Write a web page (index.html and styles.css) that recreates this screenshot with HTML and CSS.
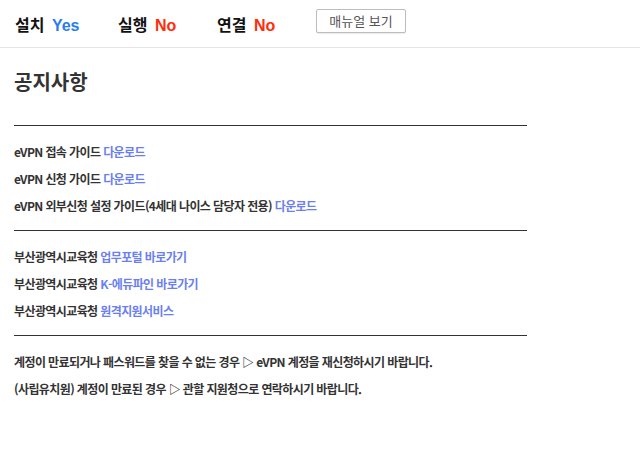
FILE: index.html
```html
<!DOCTYPE html>
<html lang="ko">
<head>
  <meta charset="UTF-8">
  <meta name="viewport" content="width=device-width, initial-scale=1.0">
  <title>eVPN 상태</title>
  <link rel="stylesheet" href="styles.css">
</head>
<body>
  <!-- 상태 표시줄 -->
  <div class="status-bar">
    <div class="stat">설치 <span class="yes">Yes</span></div>
    <div class="stat">실행 <span class="no">No</span></div>
    <div class="stat">연결 <span class="no">No</span></div>
    <button class="manual-btn">매뉴얼 보기</button>
  </div>

  <div class="notice">
    <h1>공지사항</h1>

    <div class="group">
      <p>eVPN 접속 가이드 <a href="#">다운로드</a></p>
      <p>eVPN 신청 가이드 <a href="#">다운로드</a></p>
      <p>eVPN 외부신청 설정 가이드(4세대 나이스 담당자 전용) <a href="#">다운로드</a></p>
    </div>

    <div class="group">
      <p>부산광역시교육청 <a href="#">업무포털 바로가기</a></p>
      <p>부산광역시교육청 <a href="#">K-에듀파인 바로가기</a></p>
      <p>부산광역시교육청 <a href="#">원격지원서비스</a></p>
    </div>

    <div class="group">
      <p>계정이 만료되거나 패스워드를 찾을 수 없는 경우 ▷ eVPN 계정을 재신청하시기 바랍니다.</p>
      <p>(사립유치원) 계정이 만료된 경우 ▷ 관할 지원청으로 연락하시기 바랍니다.</p>
    </div>
  </div>
</body>
</html>
```

FILE: styles.css
```css
body {
  margin: 0;
  font-family: "Noto Sans CJK KR", "Noto Sans", sans-serif;
  color: #333;
  background: #fff;
}
.status-bar {
  display: grid;
  grid-template-columns: 103px 99px 99px auto;
  align-items: center;
  height: 47px;
  padding-left: 15px;
  border-bottom: 1px solid #e4e4e4;
}
.stat {
  font-size: 16px;
  font-weight: bold;
  color: #111;
  padding-top: 1px;
}
.stat span {
  margin-left: 3px;
  font-family: "Liberation Sans", Arial, sans-serif;
}
.yes {
  color: #2a7cf0;
}
.no {
  color: #ff2d0a;
}
.manual-btn {
  justify-self: start;
  width: 90px;
  height: 24px;
  padding: 0;
  margin-top: -6px;
  font-family: inherit;
  font-size: 13px;
  color: #555;
  background: #fff;
  border: 1px solid #bdbdbd;
  border-radius: 2px;
  box-shadow: 0 1px 1px rgba(0, 0, 0, 0.08);
  cursor: pointer;
}
.notice {
  width: 513px;
  padding: 0 14px;
}
.notice h1 {
  margin: 20px 0 29px;
  font-size: 20px;
  line-height: 28px;
  color: #333;
}
.group {
  border-top: 1px solid #333;
  padding: 12px 0 11px;
}
.group p {
  margin: 0;
  font-size: 12px;
  font-weight: bold;
  line-height: 27px;
  letter-spacing: -0.6px;
}
.group a {
  color: #6b7ff0;
  text-decoration: none;
}
.group:last-child {
  padding-bottom: 0;
}
```
